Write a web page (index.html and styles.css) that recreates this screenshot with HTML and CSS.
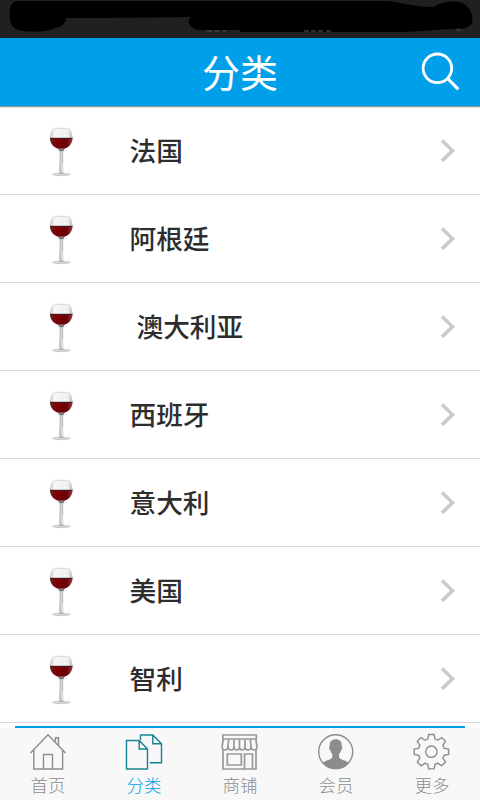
FILE: index.html
```html
<!DOCTYPE html>
<html lang="zh-CN">
<head>
<meta charset="utf-8">
<title>分类</title>
<link rel="stylesheet" href="styles.css">
</head>
<body>
<svg class="defs" width="0" height="0" aria-hidden="true">
  <defs>
    <linearGradient id="wine-fill" x1="0" x2="1" y1="0" y2="0">
      <stop offset="0" stop-color="#6c2028"/><stop offset=".25" stop-color="#800006"/><stop offset=".75" stop-color="#6a0005"/><stop offset="1" stop-color="#94404a"/>
    </linearGradient>
    <linearGradient id="bowl-fill" x1="0" x2="1" y1="0" y2="0">
      <stop offset="0" stop-color="#c4c4c4"/><stop offset=".2" stop-color="#f6f6f6"/><stop offset=".8" stop-color="#f0f0f0"/><stop offset="1" stop-color="#bcbcbc"/>
    </linearGradient>
  </defs>
  <symbol id="glass" viewBox="0 0 26 52">
    <path d="M4.500 2C2.300 4.500 1 8 1 11.500c0 6 3.500 9.500 8.500 11.500h5.500c5-2 8.500-5.500 8.500-11.500 0-3.500-1.300-7-3.500-9.500z" fill="url(#bowl-fill)"/>
    <path d="M4.500 2.300h15.500" stroke="#d2d2d2" stroke-width=".8"/>
    <path d="M1 12c.2 6 3.500 9 8 10.700h6.500c4.500-1.700 7.800-4.700 8-10.700z" fill="url(#wine-fill)"/>
    <path d="M1.200 12.300h22.200" stroke="#3d1c20" stroke-width="1"/>
    <path d="M9 22.500h6.600l-1.800 3.500h-2.700z" fill="#7b7073"/>
    <path d="M11 25h2.900l.5 22h-4.200z" fill="#d8d8d8"/>
    <path d="M11.200 25l-.2 21M13.700 25l-.1 12" stroke="#a8a8a8" stroke-width=".7"/>
    <ellipse cx="12.300" cy="48.300" rx="9.300" ry="1.800" fill="#dadada"/>
    <path d="M4 48.600q8.500 2.500 17 0" fill="none" stroke="#bbb" stroke-width=".7"/>
    <path d="M8.500 47.800l3.500-1.800 4 1.800z" fill="#aaa"/>
  </symbol>
  <symbol id="chevron" viewBox="0 0 18 26">
    <path d="M3 2.500l10.500 10.200L3 22.900" fill="none" stroke="#ccc" stroke-width="3.700"/>
  </symbol>
</svg>
<div class="app">
  <div class="status">
    <svg width="480" height="38" viewBox="0 0 480 38">
      <path d="M18 1H385C402 2 412 7 433 7C443 1 452 1 459 2C470 4 474 17 472 23C469 29 458 30 451 29L405 32H240V30H198C188 28 186 18 192 17Q120 18 66 18C65 28 57 26 51 30Q38 33 22 31C10 29 9 20 10 10C10 5 13 1 18 1Z" fill="#000"/>
      <path d="M207 31h5m3 0h4m4 0h3M304 31h5m2 0h5m2 0h5m3 0h5" stroke="#555" stroke-width="1"/>
      <path d="M456 29l4 2m0-3l-3 3m5-2v2" stroke="#444" stroke-width="1"/>
    </svg>
  </div>
  <header class="header">
    <h1 class="title">分类</h1>
    <svg class="search" width="42" height="42" viewBox="0 0 42 42">
      <circle cx="17.400" cy="17.300" r="14.300" fill="none" stroke="#fff" stroke-width="2.800"/>
      <path d="M27.700 27.500l10.600 10.900" stroke="#fff" stroke-width="3.200"/>
    </svg>
  </header>
  <main class="list">
    <div class="row"><svg class="glass"><use href="#glass"/></svg><span class="name">法国</span><svg class="chevron"><use href="#chevron"/></svg></div>
    <div class="row"><svg class="glass"><use href="#glass"/></svg><span class="name">阿根廷</span><svg class="chevron"><use href="#chevron"/></svg></div>
    <div class="row"><svg class="glass"><use href="#glass"/></svg><span class="name indented">澳大利亚</span><svg class="chevron"><use href="#chevron"/></svg></div>
    <div class="row"><svg class="glass"><use href="#glass"/></svg><span class="name">西班牙</span><svg class="chevron"><use href="#chevron"/></svg></div>
    <div class="row"><svg class="glass"><use href="#glass"/></svg><span class="name">意大利</span><svg class="chevron"><use href="#chevron"/></svg></div>
    <div class="row"><svg class="glass"><use href="#glass"/></svg><span class="name">美国</span><svg class="chevron"><use href="#chevron"/></svg></div>
    <div class="row"><svg class="glass"><use href="#glass"/></svg><span class="name">智利</span><svg class="chevron"><use href="#chevron"/></svg></div>
  </main>
  <div class="accent"></div>
  <nav class="tabs">
    <a class="tab">
      <svg width="38" height="38" viewBox="0 0 38 38"><path d="M1.500 20L19 1.800 36.500 20M4.800 17v19h28.800V17M14.500 36V21.500h9V36M26.500 8.500V4.800h3v7.300"/></svg>
      <span>首页</span>
    </a>
    <a class="tab active">
      <svg width="38" height="38" viewBox="0 0 38 38"><path d="M1.500 7.500h12.700l8.300 8.500v20h-21zM14.200 7.500V16h8.300M15.500 7V2h12.300l8.700 8.700v19H24.800M27.800 2v8.700h8.700"/></svg>
      <span>分类</span>
    </a>
    <a class="tab">
      <svg class="shop" width="38" height="38" viewBox="0.500 0 38 38"><path d="M2.300 2h33.500v4H2.300zM2.800 6L1.500 14M35.300 6l1.300 8M8.200 6L7.500 14M13.500 6V14M19 6V14M24.500 6V14M29.800 6l.7 8M1.500 13q0 4 3 4t3-4q0 4 3 4t3-4q0 4 2.750 4t2.750-4q0 4 2.750 4t2.750-4q0 4 3 4t3-4q0 4 3.050 4t3.050-4M2.500 16.500V36h33V16.500M6.800 21h14v11h-14zM24 36V21h8v15"/></svg>
      <span>商铺</span>
    </a>
    <a class="tab">
      <svg width="38" height="38" viewBox="0 0 38 38"><circle cx="18.700" cy="18.800" r="17"/><path class="solid" d="M18.700 6.300c4.200 0 6.400 2.700 6 7 1 .2.700 3.200-.6 4-.4 1.500-1 2.700-2 3.700v3.200c1.500 2.700 6.300 3 9.500 5.300q-5 6.200-12.900 6.200T5.800 29.500c3.200-2.300 8-2.600 9.500-5.300V21c-1-1-1.600-2.200-2-3.700-1.300-.8-1.600-3.800-.6-4-.4-4.300 1.800-7 6-7z"/></svg>
      <span>会员</span>
    </a>
    <a class="tab">
      <svg width="38" height="38" viewBox="-18.400 -18.700 38 38"><circle r="5.700"/><path d="M-3.600-12.600L-2.700-17.200H2.700L3.600-12.600Q5-12.400 6.360-11.460L10.320-14.140 14.140-10.320 11.460-6.360Q12.400-5 12.600-3.600L17.200-2.700V2.700L12.600 3.600Q12.400 5 11.460 6.360L14.140 10.320 10.320 14.140 6.360 11.460Q5 12.400 3.600 12.600L2.700 17.200H-2.700L-3.600 12.600Q-5 12.400-6.360 11.460L-10.320 14.140-14.140 10.320-11.460 6.360Q-12.400 5-12.600 3.600L-17.200 2.700V-2.700L-12.600-3.600Q-12.400-5-11.460-6.360L-14.140-10.320-10.320-14.140-6.360-11.460Q-5-12.400-3.600-12.600Z"/></svg>
      <span>更多</span>
    </a>
  </nav>
</div>
</body>
</html>
```
FILE: styles.css
```css
* { box-sizing: border-box; }
body {
  margin: 0;
  background: #fff;
  font-family: "Noto Sans CJK SC", sans-serif;
}
.defs { display: block; height: 0; }
.app {
  width: 480px;
  height: 800px;
  display: flex;
  flex-direction: column;
  overflow: hidden;
}
.status { height: 38px; flex: none; background: #202020; }
.status svg { display: block; }
.header {
  height: 69px;
  flex: none;
  display: grid;
  grid-template-columns: 60px 1fr 60px;
  align-items: center;
  background: #009fe9;
  border-bottom: 1px solid #8d9da0;
}
.title {
  grid-column: 2;
  margin: 0;
  text-align: center;
  font-size: 38px;
  line-height: 66px;
  padding-bottom: 2px;
  font-weight: 400;
  color: #fff;
}
.search { display: block; }
.list { flex: none; box-shadow: inset 0 1px #e6e0d8; }
.row {
  height: 88px;
  display: flex;
  align-items: center;
  padding: 0 23px 0 49px;
  border-bottom: 1px solid #dadada;
}
.glass { width: 26px; height: 52px; margin-top: 2px; }
.name {
  flex: 1;
  margin-left: 54.500px;
  padding-bottom: 2px;
  font-size: 26.700px;
  line-height: 39px;
  font-weight: 500;
  color: #2d2d2d;
}
.indented { padding-left: 7px; }
.chevron { width: 18px; height: 26px; }
.accent { height: 2px; flex: none; margin: 3px 15px 0; background: #009fe9; }
.tabs {
  flex: 1;
  display: grid;
  grid-template-columns: repeat(5, 1fr);
  background: #f8f8f8;
}
.tab {
  display: flex;
  flex-direction: column;
  align-items: center;
  padding-top: 5px;
  color: #8c8c8c;
}
.tab svg {
  display: block;
  fill: none;
  stroke: currentColor;
  stroke-width: 1.400;
}
.tab .shop { stroke-width: 1.700; color: #999; }
.tab .solid { fill: currentColor; stroke: none; }
.tab span { font-size: 17.500px; line-height: 28px; font-weight: 300; }
.tab.active { color: #16828f; }
.tab.active span { color: #009fe9; }
```
